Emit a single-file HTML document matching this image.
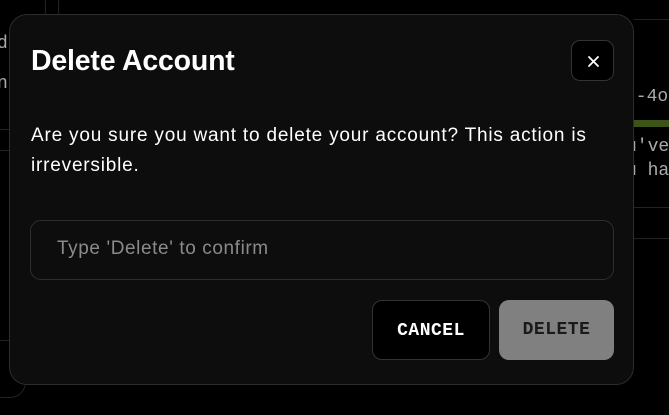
<!DOCTYPE html>
<html><head><meta charset="utf-8"><style>
*{box-sizing:border-box;margin:0;padding:0}
body{width:669px;height:415px;background:#000;position:relative;overflow:hidden;font-family:"Liberation Sans",sans-serif;color:#fff}
.bg{position:absolute;font-family:"Liberation Mono",monospace;color:#aaa;font-size:18px;white-space:nowrap}
.modal{position:absolute;left:9px;top:14px;width:625px;height:371px;background:#0d0d0d;border:1px solid #2c2c2c;border-radius:18px}
h1{position:absolute;left:21px;top:30px;font-size:28.5px;font-weight:700;letter-spacing:-0.2px;white-space:nowrap}
.close{position:absolute;left:561px;top:25px;width:43px;height:41px;border:1px solid #333;border-radius:9px;background:#000}
p{position:absolute;left:21px;top:106px;width:575px;font-size:19px;line-height:30px;letter-spacing:0.8px}
.input{position:absolute;left:20px;top:205px;width:584px;height:60px;border:1px solid #2e2e2e;border-radius:11px;font-size:19px;color:#8a8a8a;padding:17px 0 0 26px;letter-spacing:0.6px}
.btn{position:absolute;top:285px;height:60px;border-radius:10px;font-family:"Liberation Mono",monospace;font-weight:700;font-size:18px;text-align:center;line-height:60px;letter-spacing:0.5px}
.cancel{left:362px;width:118px;background:#000;border:1px solid #333;color:#fff}
.delete{left:489px;width:115px;background:#808080;color:#1a1a1a}
</style></head><body>
<div style="position:absolute;left:45px;top:0;width:1px;height:15px;background:#222"></div>
<div style="position:absolute;left:58px;top:0;width:1px;height:15px;background:#222"></div>
<div style="position:absolute;left:0;top:129px;width:10px;height:1px;background:#222"></div>
<div style="position:absolute;left:0;top:150px;width:10px;height:1px;background:#222"></div>
<div style="position:absolute;left:634px;top:19px;width:35px;height:1px;background:#222"></div>
<div style="position:absolute;left:634px;top:238px;width:35px;height:1px;background:#222"></div>
<div style="position:absolute;left:634px;top:207px;width:35px;height:1px;background:#222"></div>
<div class="bg" style="left:-3px;top:34px">d</div>
<div class="bg" style="left:-3px;top:74px">n</div>
<div class="bg" style="left:625px;top:87px">t-4o</div>
<div style="position:absolute;left:634px;top:120px;width:35px;height:7px;background:#3d5418"></div>
<div class="bg" style="left:626px;top:137px">u've</div>
<div class="bg" style="left:626px;top:161px">u ha</div>
<div style="position:absolute;left:-20px;top:340px;width:46px;height:58px;border:1px solid #222;border-radius:16px"></div>
<div class="modal">
<h1>Delete Account</h1>
<div class="close"><svg width="43" height="41" viewBox="0 0 43 41"><path d="M17 16 L26 25 M26 16 L17 25" stroke="#fff" stroke-width="1.8" stroke-linecap="round"/></svg></div>
<p>Are you sure you want to delete your account? This action is irreversible.</p>
<div class="input">Type 'Delete' to confirm</div>
<div class="btn cancel">CANCEL</div>
<div class="btn delete">DELETE</div>
</div>
</body></html>
